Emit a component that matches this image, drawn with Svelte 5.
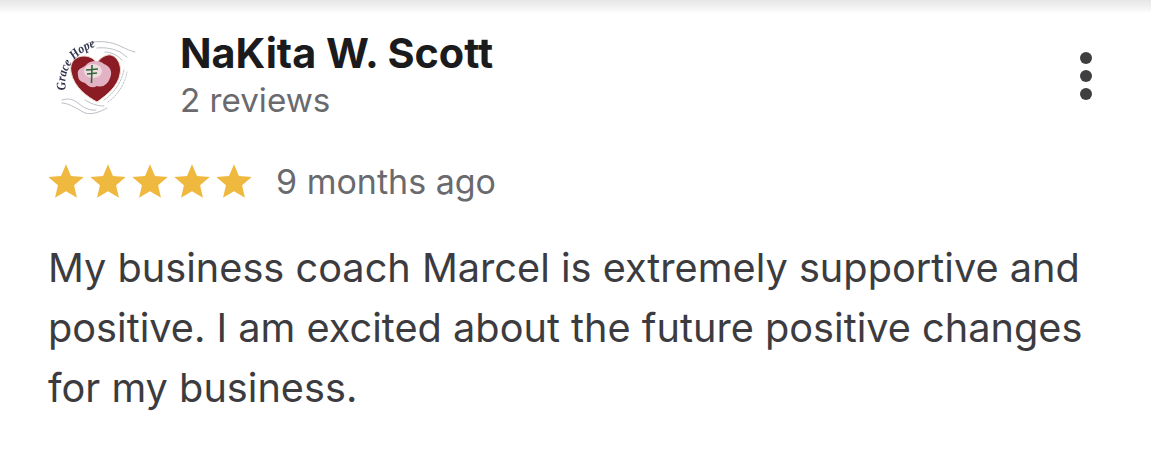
<script>
  const stars = [0, 1, 2, 3, 4];
</script>

<main class="card">
  <div class="shade"></div>
  <header class="head">
    <svg class="logo" viewBox="48 36 90 90" aria-label="Grace Hope logo">
      <defs>
        <path id="arc" d="M66 90 C63 74 70 56 94 47" />
        <filter id="soft" x="-5%" y="-5%" width="110%" height="110%"><feGaussianBlur stdDeviation="0.4" /></filter>
      </defs>
      <g filter="url(#soft)">
        <g fill="none" stroke="#b4b7be" stroke-width="0.9" stroke-linecap="round">
          <path d="M88 43 C100 40 112 42 120 46 C126 49 131 51 135 52" />
          <path d="M97 48 C106 47 114 49 120 52 C123 54 125 56 127 57" />
          <path d="M105 52 C110 52 116 54 122 60" />
          <path d="M62 100 C68 98 73 99 78 103 C84 108 90 111 96 110" />
          <path d="M62 103 C68 103 74 107 85 113 C92 115 100 112 107 108" />
          <path d="M85 100 C90 103 96 106 104 106" />
          <path d="M104 100 C113 94 121 84 124 70" stroke-dasharray="2 1.2" />
          <path d="M108 102 C117 96 125 84 127 72" stroke-dasharray="1.5 1.5" />
        </g>
        <path d="M97 102 C88 97 74 88 71 72 C69 62 76 56 84 56 C90 56 94 59 97 63 C100 58 106 54 111 55 C118 57 122 66 120 74 C118 86 107 95 97 102 Z" fill="#8b1d26" stroke="#f2d9d0" stroke-width="1" />
        <path d="M78 75 C76 68 84 68 86 65 C90 60 100 60 104 64 C110 66 113 72 110 78 C108 84 103 88 97 86 C92 89 88 86 85 83 C81 82 78 80 78 75 Z" fill="#e2b3c4" />
        <ellipse cx="93" cy="71" rx="9" ry="7" fill="#f1dbe2" />
        <path d="M92 65 L91.5 83 M86 70 L98 69 M87 74 L97 73" fill="none" stroke="#2f6b35" stroke-width="1.6" />
        <text class="script"><textPath href="#arc" textLength="58" lengthAdjust="spacingAndGlyphs">Grace Hope</textPath></text>
      </g>
    </svg>
    <div class="who">
      <div class="name">NaKita W. Scott</div>
      <div class="reviews">2 reviews</div>
    </div>
    <div class="more" aria-label="More options">
      <span></span><span></span><span></span>
    </div>
  </header>

  <div class="rating">
    <div class="stars">
      {#each stars as s (s)}
        <svg class="star" viewBox="0 0 24 24">
          <path d="M12 .8 15.3 8.6 23.8 9.3 17.4 14.9 19.3 23.2 12 18.8 4.7 23.2 6.6 14.9 .2 9.3 8.7 8.6Z" />
        </svg>
      {/each}
    </div>
    <span class="when">9 months ago</span>
  </div>

  <p class="body">My business coach Marcel is extremely supportive and<br />positive. I am excited about the future positive changes<br />for my business.</p>
</main>

<style>
  :global(body) {
    margin: 0;
    background: #fff;
  }

  .card {
    position: relative;
    box-sizing: border-box;
    width: 1151px;
    height: 449px;
    padding: 28px 0 0 48px;
    overflow: hidden;
    background: #fff;
    font-family: Inter, "Liberation Sans", sans-serif;
  }

  .shade {
    position: absolute;
    top: 0;
    left: 0;
    right: 0;
    height: 13px;
    background: linear-gradient(#e6e6e6, #fafafa 90%, #fff);
  }

  .head {
    display: flex;
    align-items: flex-start;
  }

  .logo {
    flex: none;
    width: 90px;
    height: 90px;
    margin-top: 8px;
  }

  .script {
    font-family: "Liberation Serif", serif;
    font-style: italic;
    font-size: 13px;
    font-weight: 700;
    fill: #33344f;
  }

  .who {
    margin-left: 43px;
  }

  .name {
    color: #1b1b1d;
    font-size: 41.4px;
    font-weight: 700;
    line-height: 50px;
    margin-left: -1px;
    white-space: nowrap;
  }

  .reviews {
    margin-top: 2px;
    color: #6a6a6e;
    font-size: 33.2px;
    line-height: 40px;
    margin-left: -1px;
  }

  .more {
    display: flex;
    flex-direction: column;
    gap: 6px;
    margin: 24px 0 0 auto;
    padding-right: 59px;
  }

  .more span {
    display: block;
    width: 12px;
    height: 12px;
    border-radius: 50%;
    background: #3f3f42;
  }

  .rating {
    display: flex;
    align-items: center;
    margin-top: 34px;
  }

  .stars {
    display: flex;
    gap: 6px;
  }

  .star {
    width: 36px;
    height: 36px;
    fill: #efb93f;
  }

  .when {
    margin: 2px 0 0 24px;
    color: #6a6a6e;
    font-size: 34px;
    line-height: 40px;
  }

  .body {
    margin: 36px 0 0;
    color: #3c3c40;
    font-size: 39.7px;
    line-height: 60px;
    white-space: nowrap;
  }
</style>
